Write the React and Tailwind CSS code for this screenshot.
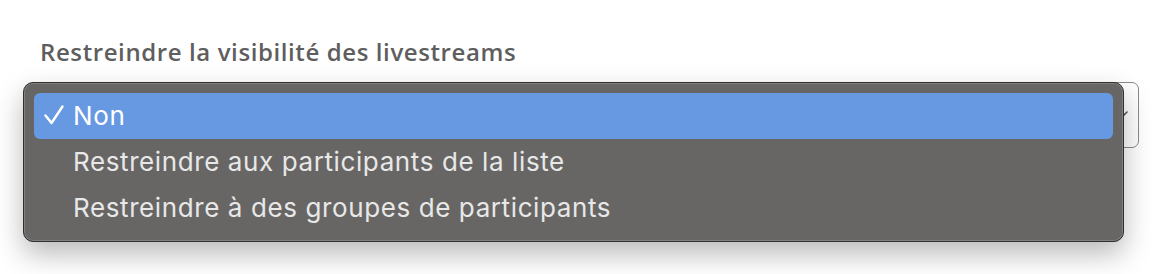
import React from 'react'

const options = [
  { label: 'Non', selected: true },
  { label: 'Restreindre aux participants de la liste', selected: false },
  { label: 'Restreindre à des groupes de participants', selected: false },
]

function Check() {
  return (
    <svg className="w-[22px] h-[22px]" viewBox="0 0 22 22" fill="none">
      <path d="M1.5 10.5 L7.5 18 L18.5 1.5" stroke="currentColor" strokeWidth="2.4" strokeLinecap="round" strokeLinejoin="round" />
    </svg>
  )
}

export default function App() {
  return (
    <div className="relative w-[1154px] h-[274px] bg-white overflow-hidden font-['Inter',sans-serif]">
      <div className="pt-[35px] pl-[40px]">
        <label className="block font-['Open_Sans',sans-serif] font-semibold text-[24px] leading-[33px] tracking-[0.6px] text-[#5e5e5e]">
          Restreindre la visibilité des livestreams
        </label>
      </div>

      {/* native select, mostly hidden behind its open menu */}
      <div className="mt-[14px] ml-[40px] w-[1099px] h-[66px] border border-[#8a8a8a] rounded-[7px] flex items-center justify-end pr-[10px]">
        <svg className="w-[14px] h-[14px] text-[#555]" viewBox="0 0 14 14" fill="none">
          <path d="M1 4 L7 10 L13 4" stroke="currentColor" strokeWidth="1.6" strokeLinecap="round" strokeLinejoin="round" />
        </svg>
      </div>

      {/* open menu */}
      <div className="absolute left-[23px] top-[82px] w-[1101px] rounded-[10px] border border-[#2f2f2f] bg-[#676665] p-[10px] shadow-[0_12px_28px_rgba(0,0,0,0.28),inset_0_0_0_1px_rgba(255,255,255,0.18)]">
        {options.map((opt) => (
          <div
            key={opt.label}
            className={`flex items-center h-[46px] rounded-[6px] ${opt.selected ? 'bg-[#6798e2] text-white' : 'text-[#e8e8e8]'}`}
          >
            <span className="w-[39px] flex justify-center pl-[2px]">
              {opt.selected && <Check />}
            </span>
            <span className="text-[26px] leading-none tracking-[0.6px]">{opt.label}</span>
          </div>
        ))}
      </div>
    </div>
  )
}
